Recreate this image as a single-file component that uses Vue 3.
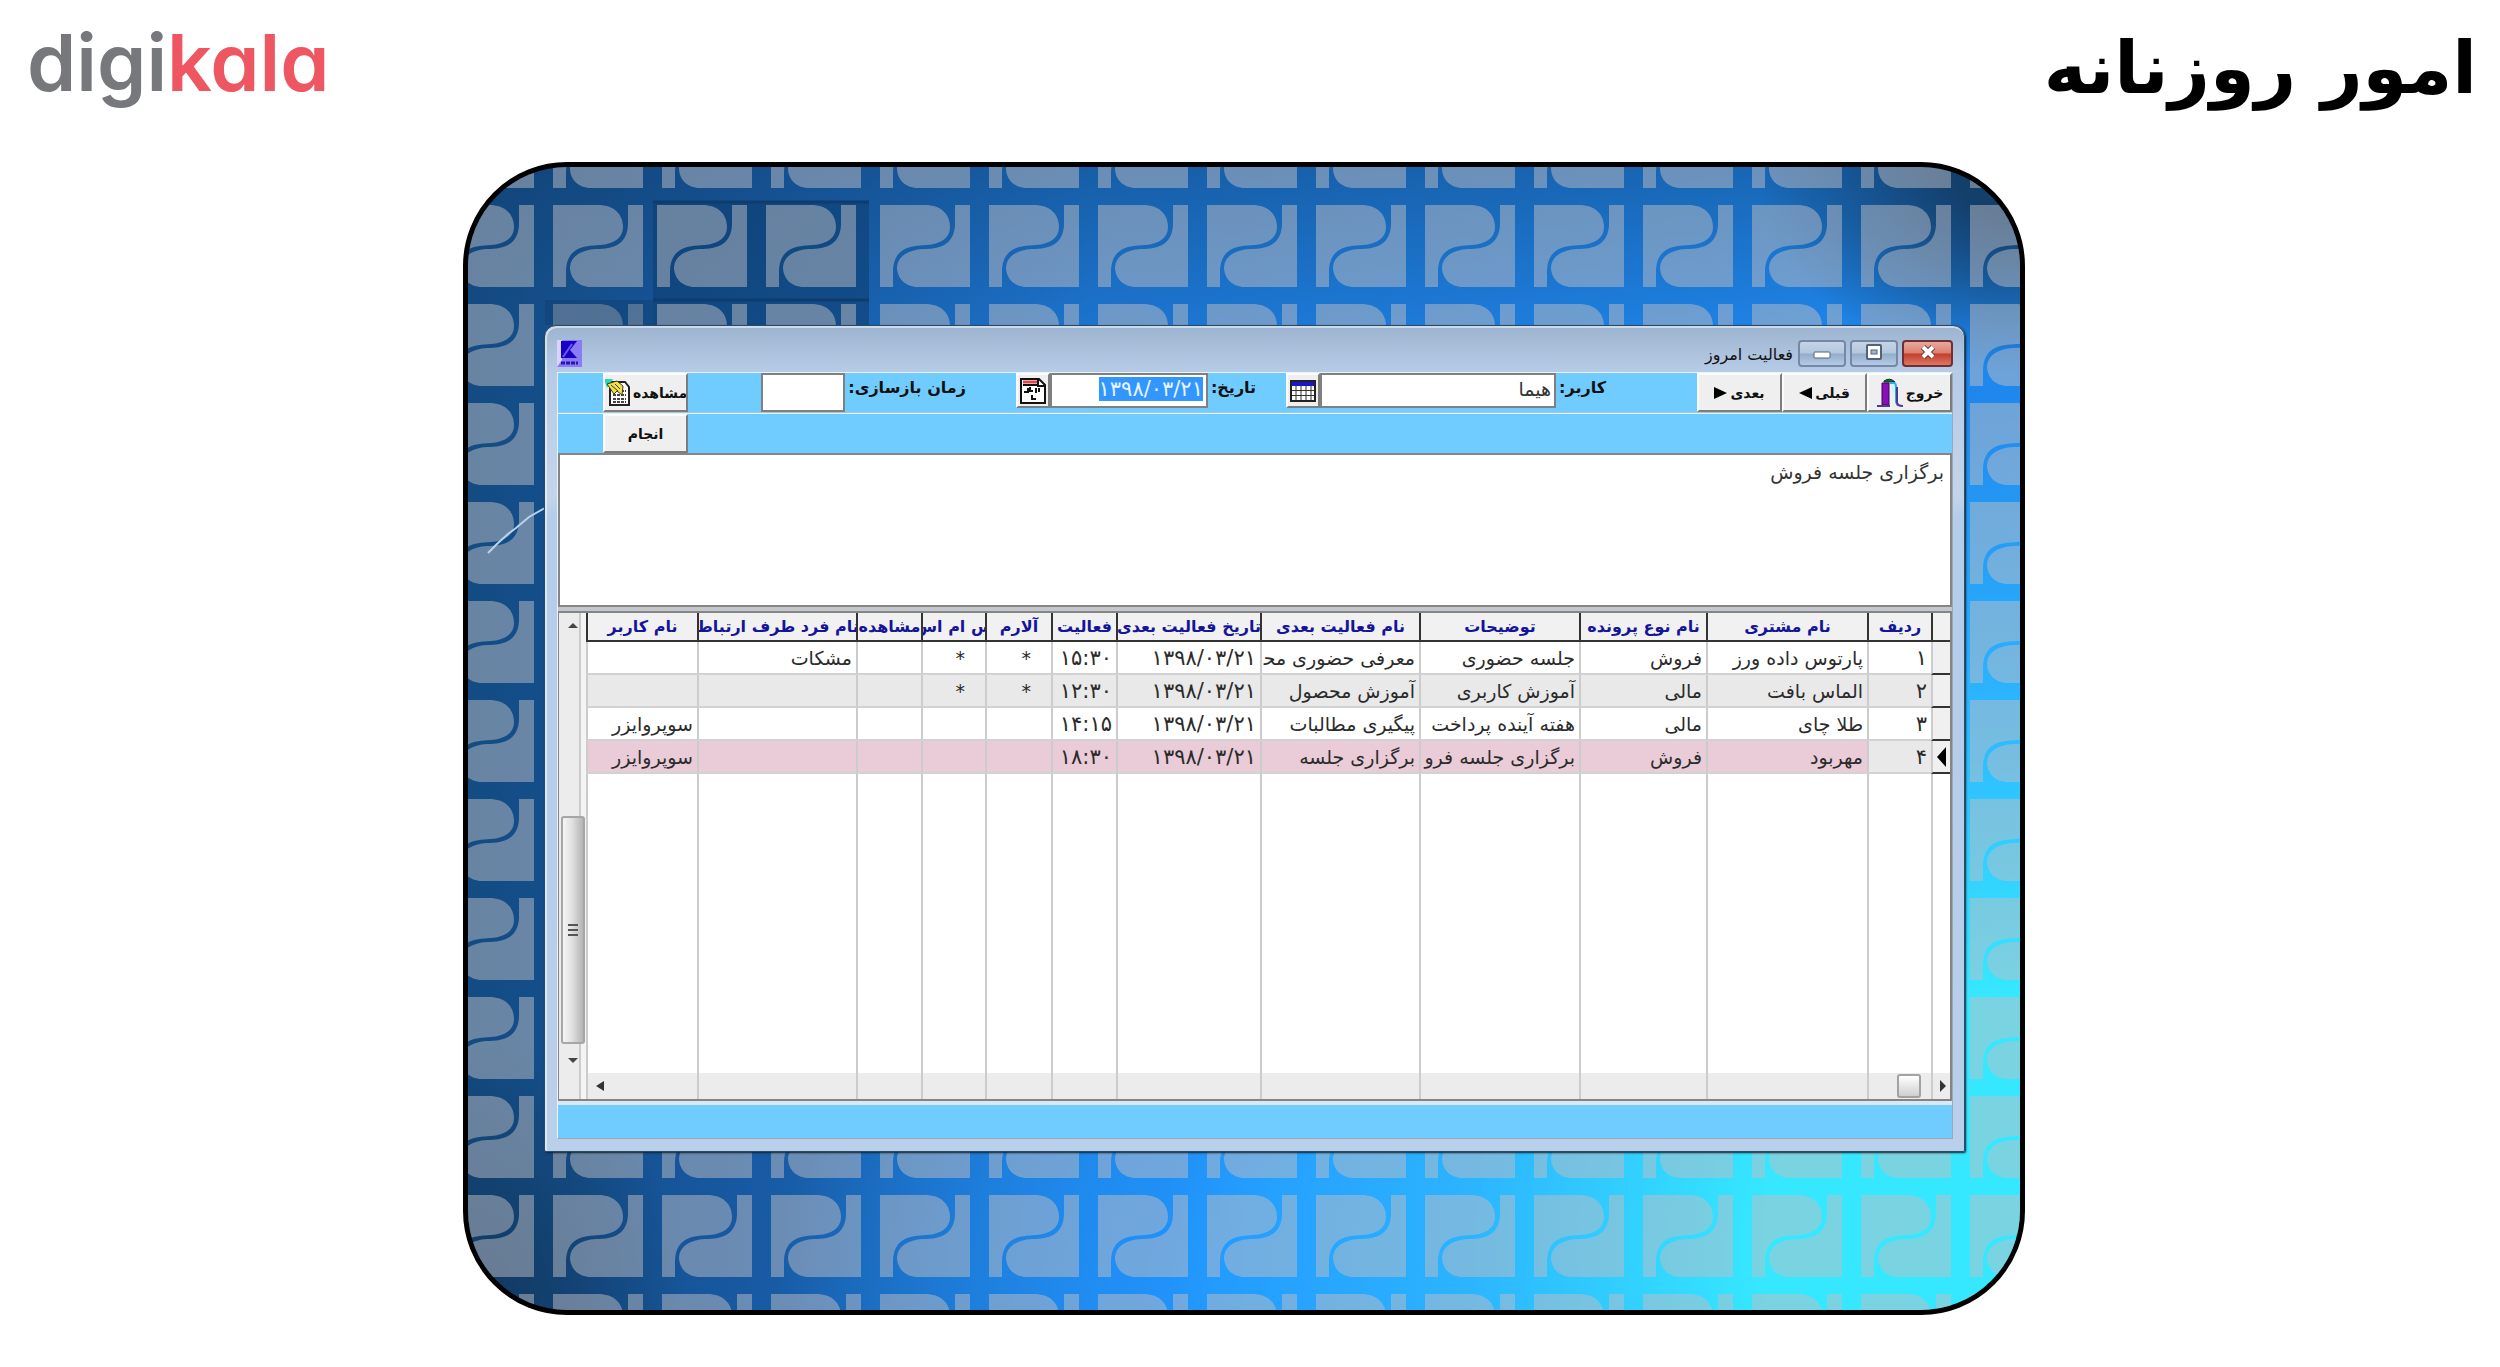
<script setup>
import { onMounted, ref } from 'vue'

const user = ref('هیما')
const date = ref('۱۳۹۸/۰۳/۲۱')
const refresh = ref('')
const note = ref('برگزاری جلسه فروش')
const dateBox = ref(null)

const columns = [
  { key: 'mark', label: '', width: 19 },
  { key: 'no', label: 'ردیف', width: 64 },
  { key: 'customer', label: 'نام مشتری', width: 161 },
  { key: 'file', label: 'نام نوع پرونده', width: 127 },
  { key: 'desc', label: 'توضیحات', width: 160 },
  { key: 'next', label: 'نام فعالیت بعدی', width: 159 },
  { key: 'date', label: 'تاریخ فعالیت بعدی', width: 144 },
  { key: 'time', label: 'فعالیت', width: 65 },
  { key: 'alarm', label: 'آلارم', width: 66 },
  { key: 'sms', label: 'س ام اس', width: 64 },
  { key: 'seen', label: 'مشاهده', width: 65 },
  { key: 'contact', label: 'نام فرد طرف ارتباط', width: 159 },
  { key: 'user', label: 'نام کاربر', width: 111 }
]

const rows = [
  { no: '۱', customer: 'پارتوس داده ورز', file: 'فروش', desc: 'جلسه حضوری', next: 'معرفی حضوری مح\u200d', date: '۱۳۹۸/۰۳/۲۱', time: '۱۵:۳۰', alarm: '*', sms: '*', contact: 'مشکات' },
  { no: '۲', customer: 'الماس بافت', file: 'مالی', desc: 'آموزش کاربری', next: 'آموزش محصول', date: '۱۳۹۸/۰۳/۲۱', time: '۱۲:۳۰', alarm: '*', sms: '*' },
  { no: '۳', customer: 'طلا چای', file: 'مالی', desc: 'هفته آینده پرداخت', next: 'پیگیری مطالبات', date: '۱۳۹۸/۰۳/۲۱', time: '۱۴:۱۵', user: 'سوپروایزر' },
  { no: '۴', customer: 'مهربود', file: 'فروش', desc: 'برگزاری جلسه فرو', next: 'برگزاری جلسه', date: '۱۳۹۸/۰۳/۲۱', time: '۱۸:۳۰', user: 'سوپروایزر', current: true }
]

onMounted(() => {
  dateBox.value.focus()
  dateBox.value.select()
})
</script>

<template>
  <div class="page" dir="rtl">
    <header class="top">
      <h1>امور روزنانه</h1>
      <div class="brand" dir="ltr"><span>digi</span><span class="red">kala</span></div>
    </header>

    <main class="desktop">
      <svg class="wallpaper" aria-hidden="true">
        <defs>
          <pattern id="tiles" x="85" y="38" width="109" height="99" patternUnits="userSpaceOnUse">
            <g fill="#bebec3" fill-opacity=".5">
              <path d="M0 0H45C61 0 70 9 70 22C70 33 61 39 47 40C29 41 14 43 13 66V82H0Z" />
              <path d="M75 0H90V82H38C25 82 17 73 17 62C18 51 28 45 43 44C61 44 74 39 75 20Z" />
            </g>
          </pattern>
          <pattern id="tiles-shifted" x="189" y="38" width="109" height="99" patternUnits="userSpaceOnUse">
            <g fill="#bebec3" fill-opacity=".5">
              <path d="M0 0H45C61 0 70 9 70 22C70 33 61 39 47 40C29 41 14 43 13 66V82H0Z" />
              <path d="M75 0H90V82H38C25 82 17 73 17 62C18 51 28 45 43 44C61 44 74 39 75 20Z" />
            </g>
          </pattern>
          <mask id="hole">
            <rect width="100%" height="100%" fill="#fff" />
            <rect x="185" y="35" width="216" height="123" fill="#000" />
          </mask>
        </defs>
        <rect width="100%" height="100%" fill="url(#tiles)" mask="url(#hole)" />
        <rect x="185" y="35" width="216" height="123" fill="#0d3f72" fill-opacity=".6" />
        <rect x="185" y="35" width="216" height="123" fill="url(#tiles-shifted)" />
        <path d="M185 133H401M185 35H401" stroke="#0e3c6c" stroke-width="3" />
        <rect x="77" y="133" width="108" height="25" fill="#0b2e52" fill-opacity=".25" />
        <path d="M77 341L61 350L48 361L40 367L30 376L20 386" fill="none" stroke="#b8d4ec" stroke-width="2" />
      </svg>

      <section class="window">
        <div class="titlebar">
          <div class="controls">
            <button class="ctl close" aria-label="بستن">
              <svg width="20" height="16" viewBox="0 0 20 16"><path d="M5 3L15 13M15 3L5 13" stroke="#5d2b2b" stroke-width="6" /><path d="M5 3L15 13M15 3L5 13" stroke="#fff" stroke-width="4" /></svg>
            </button>
            <button class="ctl" aria-label="بزرگ‌نمایی">
              <svg width="20" height="16" viewBox="0 0 20 16"><rect x="3" y="1" width="14" height="14" rx="1" fill="#fff" stroke="#53627a" stroke-width="2" /><rect x="7" y="6" width="6" height="4" fill="#9fb4cf" stroke="#53627a" /></svg>
            </button>
            <button class="ctl" aria-label="کوچک‌نمایی">
              <svg width="20" height="16" viewBox="0 0 20 16"><rect x="2" y="8" width="16" height="6" rx="1" fill="#fff" stroke="#53627a" /></svg>
            </button>
          </div>
          <h2>فعالیت امروز</h2>
          <svg class="app-icon" width="25" height="27" viewBox="0 0 25 27" aria-hidden="true">
            <rect width="25" height="27" fill="#8a7cf4" /><path d="M0 0H5V20L0 27Z" fill="#d8d4ff" />
            <path d="M4 1H20L13 10L20 18H4Z" fill="#1a00c4" /><path d="M6 17L15 4" stroke="#6a5cf0" stroke-width="2" />
            <path d="M4 23H21" stroke="#2a14b4" stroke-width="3" stroke-dasharray="4 1" />
          </svg>
        </div>

        <div class="client">
          <div class="bar">
            <button class="btn">خروج
              <svg width="28" height="30" viewBox="0 0 28 30" aria-hidden="true"><path d="M8 3Q14 -1 19 4H8Z" fill="#087a2c" stroke="#123" /><path d="M6 5H13V27H6Z" fill="#8b0fb8" stroke="#3a0850" /><path d="M14 5H18Q20 5 20 9V24L22 28" fill="#c8f4ff" stroke="#3aa8d8" stroke-width="2" /><path d="M1 28H14M21 9V24Q21 28 27 28" fill="none" stroke="#4a3a9c" stroke-width="2" /></svg>
            </button>
            <button class="btn">قبلی<svg width="14" height="12" viewBox="0 0 14 12" aria-hidden="true"><path d="M0 6L13 0V12Z" /></svg></button>
            <button class="btn gap">بعدی<svg width="14" height="12" viewBox="0 0 14 12" aria-hidden="true"><path d="M13 6L0 0V12Z" /></svg></button>

            <div class="field wide-gap">
              <label for="user">کاربر:</label>
              <input id="user" v-model="user" class="w-user" />
              <button class="pick" aria-label="انتخاب کاربر">
                <svg width="26" height="22" viewBox="0 0 26 22"><rect x="1" y="1" width="24" height="20" fill="#fff" stroke="#222" stroke-width="2" /><rect x="2" y="2" width="22" height="4" fill="#1818c8" /><path d="M2 10.500H24M2 15.500H24M6 6V20M11 6V20M16 6V20M21 6V20" stroke="#333" /></svg>
              </button>
            </div>
            <div class="field">
              <label for="date">تاریخ:</label>
              <input id="date" ref="dateBox" v-model="date" class="w-date" />
              <button class="pick" aria-label="انتخاب تاریخ">
                <svg width="26" height="26" viewBox="0 0 26 26"><path d="M1 1H19L25 7V25H1Z" fill="#fff" stroke="#111" stroke-width="2" /><path d="M3 4H17" stroke="#e04848" stroke-width="3" /><path d="M18 2V8H24M3 7H17" fill="none" stroke="#111" stroke-width="2" /><path d="M4 14H8V10M10 9V13H13M16 10V15M19 10V14M12 17V21H16" fill="none" stroke="#111" stroke-width="2" /></svg>
              </button>
            </div>
            <div class="field time">
              <label for="refresh">زمان بازسازی:</label>
              <input id="refresh" v-model="refresh" class="w-time" />
            </div>
            <button class="btn last view">مشاهده
              <svg width="27" height="28" viewBox="0 0 27 28" aria-hidden="true"><path d="M6 3H21L25 8V26H6Z" fill="#fff" stroke="#222" stroke-width="2" /><path d="M9 16H22M9 20H22M9 23H22M17 12H22" stroke="#444" stroke-width="2" stroke-dasharray="3 1" /><path d="M0 0H9L3 9Z" fill="#23d7c0" /><path d="M3 5L13 2L19 7L18 16L13 12L10 15Z" fill="#f2e04a" stroke="#3c3a10" /><path d="M7 6L14 12M11 5L16 10" stroke="#3c3a10" /></svg>
            </button>
          </div>
          <div class="bar second"><button class="btn last">انجام</button></div>

          <textarea v-model="note" aria-label="شرح فعالیت"></textarea>

          <div class="grid">
            <table>
              <colgroup><col v-for="c in columns" :key="c.key" :style="{ width: c.width + 'px' }" /></colgroup>
              <thead>
                <tr><th v-for="c in columns" :key="c.key" scope="col"><div>{{ c.label }}</div></th></tr>
              </thead>
              <tbody>
                <tr v-for="r in rows" :key="r.no" :class="{ current: r.current }">
                  <td v-for="c in columns" :key="c.key" :class="c.key">
                    <svg v-if="c.key === 'mark' && r.current" width="9" height="20" viewBox="0 0 9 20" aria-label="ردیف جاری"><path d="M0 10L9 0V20Z" /></svg>
                    <template v-else>{{ r[c.key] }}</template>
                  </td>
                </tr>
                <tr class="blank"><td v-for="c in columns" :key="c.key"></td></tr>
                <tr class="hscroll">
                  <td><svg width="6" height="12" viewBox="0 0 6 12" aria-hidden="true"><path d="M6 6L0 0V12Z" /></svg></td>
                  <td><span class="hthumb"></span></td>
                  <td v-for="n in 10" :key="n"></td>
                  <td class="end"><svg width="8" height="10" viewBox="0 0 8 10" aria-hidden="true"><path d="M0 5L8 0V10Z" /></svg></td>
                </tr>
              </tbody>
            </table>
            <div class="vscroll">
              <svg width="10" height="5" viewBox="0 0 10 5" aria-hidden="true"><path d="M0 5L5 0L10 5Z" /></svg>
              <span class="vthumb"><i></i><i></i><i></i></span>
              <svg width="10" height="5" viewBox="0 0 10 5" aria-hidden="true"><path d="M0 0L5 5L10 0Z" /></svg>
            </div>
          </div>
          <div class="status"></div>
        </div>
      </section>
    </main>
  </div>
</template>

<style>
body {
  margin: 0;
  background: #fff;
}
</style>

<style scoped>
.page {
  font-family: 'DejaVu Sans', sans-serif;
  color: #111;
  padding-bottom: 51px;
}
.page * {
  box-sizing: border-box;
}
.top {
  display: flex;
  justify-content: space-between;
  align-items: flex-start;
  height: 162px;
  padding: 0 23px 0 27px;
}
h1 {
  margin: 0;
  font-size: 72px;
  line-height: 136px;
  font-weight: 700;
  color: #000;
}
.brand {
  font: 600 79px/124px Inter, sans-serif;
  font-feature-settings: 'cv11';
  color: #77787b;
}
.red {
  color: #ee5661;
}
.desktop {
  position: relative;
  width: 62.48%;
  margin-right: 19%;
  padding: 158px 55px 158px 76px;
  border: 5px solid #000;
  border-radius: 104px;
  overflow: hidden;
  background:
    radial-gradient(ellipse 17% 18% at 100% 0%, #133f6b 25%, transparent 100%),
    radial-gradient(ellipse 55% 75% at 100% 95%, #36e8ff 30%, #2cb4ff 65%, transparent 100%),
    radial-gradient(ellipse 40% 50% at 60% 100%, #2196ff 30%, transparent 100%),
    radial-gradient(ellipse 14% 24% at 0% 100%, #123c66 20%, transparent 100%),
    linear-gradient(180deg, rgba(16, 60, 106, .4), transparent 14%),
    linear-gradient(90deg, #134b82 0, #17579e 16%, #1c74ce 40%, #1f88ee 100%);
}
.wallpaper {
  position: absolute;
  inset: 0;
  width: 100%;
  height: 100%;
}
.window {
  position: relative;
  padding: 0 11px 12px 12px;
  border: 1px solid #2b4a68;
  border-radius: 12px 12px 2px 2px;
  box-shadow: inset 1px 1px 0 1px rgba(255, 255, 255, .5), 1px 1px 2px #123;
  background: linear-gradient(180deg, #9db4d0 0, #b6cbe6 46px, #c3d5ea 170px, #b4cdea 190px, #b9cfea 100%);
}
.titlebar {
  display: flex;
  height: 46px;
  padding-top: 14px;
}
.controls {
  display: flex;
  gap: 4px;
}
.ctl {
  width: 48px;
  height: 27px;
  padding: 0;
  border: 2px solid #7589a6;
  border-radius: 4px;
  background: linear-gradient(#c5d4e6 0, #b4c7de 48%, #93acc9 52%, #b3cbe6);
}
.ctl.close {
  width: 51px;
  border-color: #6d3038;
  background: linear-gradient(#e8a89b 0, #dc7f70 48%, #c33f2b 52%, #dc7763);
}
h2 {
  margin: 0 5px 0 auto;
  flex: 1;
  font-size: 16px;
  line-height: 30px;
  font-weight: 400;
}
.client {
  border: 1px solid #9aa8b8;
  border-top-color: #e8f2fb;
  border-left-color: #e8f2fb;
  background: #c4c8cd;
}
.bar {
  display: flex;
  align-items: flex-start;
  height: 40px;
  background: #70cbff;
  border-bottom: 1px solid #a5c7de;
}
.bar.second {
  height: 40px;
  border-bottom: 0;
  border-top: 1px solid #e2f3ff;
}
.btn {
  display: flex;
  align-items: center;
  justify-content: center;
  gap: 2px;
  width: 85px;
  height: 39px;
  padding: 0;
  border: 2px solid #fbfbfb;
  border-right-color: #7d7d7d;
  border-bottom-color: #7d7d7d;
  background: #f0efef;
  font: 700 14px/20px 'DejaVu Sans', sans-serif;
  color: #111;
  white-space: nowrap;
  overflow: hidden;
}
.btn svg {
  flex: none;
}
.last {
  margin-right: auto;
  margin-left: 45px;
}
.field {
  display: flex;
  margin-right: 30px;
}
.wide-gap {
  margin-right: 91px;
}
.time {
  margin-right: 50px;
}
label {
  padding: 5px 0 0 3px;
  font-size: 16px;
  line-height: 20px;
  font-weight: 700;
  white-space: nowrap;
}
input {
  height: 35px;
  padding: 0 3px 4px;
  border: 2px solid #808080;
  background: #fff;
  font: 19px/26px 'DejaVu Sans', sans-serif;
  color: #333;
  outline: 0;
}
input::selection {
  background: #3296ff;
  color: #e8f4ff;
}
.w-user {
  width: 236px;
}
.w-date {
  width: 158px;
  font-size: 21px;
}
.w-time {
  width: 84px;
  height: 39px;
}
.pick {
  display: flex;
  align-items: center;
  justify-content: center;
  width: 34px;
  height: 35px;
  padding: 0;
  border: 2px solid #fbfbfb;
  border-right-color: #7d7d7d;
  border-bottom-color: #7d7d7d;
  background: #f0efef;
}
textarea {
  display: block;
  width: 100%;
  height: 154px;
  margin: 0 0 4px;
  padding: 4px 6px;
  border: 2px solid #858585;
  background: #fff;
  font: 19px/26px 'DejaVu Sans', sans-serif;
  color: #333;
  resize: none;
  outline: 0;
}
.grid {
  display: flex;
  border: 2px solid #858585;
  background: #fff;
}
table {
  flex: 1;
  width: 100%;
  min-width: 0;
  table-layout: fixed;
  border-collapse: separate;
  border-spacing: 0;
}
th {
  height: 29px;
  padding: 0;
  border-left: 2px solid #333;
  border-bottom: 2px solid #333;
  background: #f1f1f1;
  font-size: 16px;
  line-height: 26px;
  font-weight: 700;
  color: #15159a;
}
th div {
  display: flex;
  justify-content: center;
  white-space: nowrap;
  overflow: hidden;
}
td {
  height: 33px;
  padding: 0 4px;
  border-left: 2px solid #ccc;
  border-bottom: 2px solid #d2d2d2;
  font-size: 19px;
  line-height: 30px;
  color: #2b2b2b;
  text-align: right;
  white-space: nowrap;
  overflow: hidden;
}
td.no,
td.date,
td.time {
  font-size: 21px;
}
tr:nth-child(2) td {
  background: #e9e9e9;
}
tr.current td {
  background: #e9ccd7;
}
tr.current td.no {
  background: #e9e9e9;
}
tbody tr td.mark,
tr.current td.mark {
  padding: 0 4px;
  background: #f0f0f0;
  border-bottom-color: #333;
}
td.mark svg {
  display: block;
}
td.alarm,
td.sms {
  padding-right: 20px;
}
tr.blank td {
  height: 299px;
  border-bottom: 0;
}
tr.hscroll td {
  height: 26px;
  padding: 0 4px;
  border-bottom: 0;
  background: #ececec;
  line-height: 0;
}
tr.hscroll td.end {
  text-align: left;
  padding-left: 8px;
}
tr.hscroll svg {
  fill: #333;
}
.hthumb {
  display: inline-block;
  width: 24px;
  height: 24px;
  margin-right: 6px;
  border: 2px solid #a2a2a2;
  border-radius: 3px;
  background: linear-gradient(#fff, #cfcfcf);
}
.vscroll {
  display: flex;
  flex: none;
  flex-direction: column;
  align-items: center;
  width: 27px;
  padding: 10px 0 36px;
  background: linear-gradient(90deg, #ececec 20px, #ccc 20px, #ccc 22px, #f4f4f4 22px);
}
.vscroll svg {
  fill: #444;
}
.vthumb {
  display: flex;
  flex-direction: column;
  align-items: center;
  justify-content: center;
  gap: 3px;
  width: 24px;
  height: 228px;
  margin: auto 0 14px;
  border: 2px solid #a6a6a6;
  border-radius: 3px;
  background: linear-gradient(90deg, #f5f5f5, #e0e0e0 45%, #b4b4b4);
}
.vthumb i {
  width: 10px;
  height: 2px;
  background: #555;
}
.status {
  height: 37px;
  border-top: 4px solid #d8e8f4;
  background: #70cbff;
}
</style>
